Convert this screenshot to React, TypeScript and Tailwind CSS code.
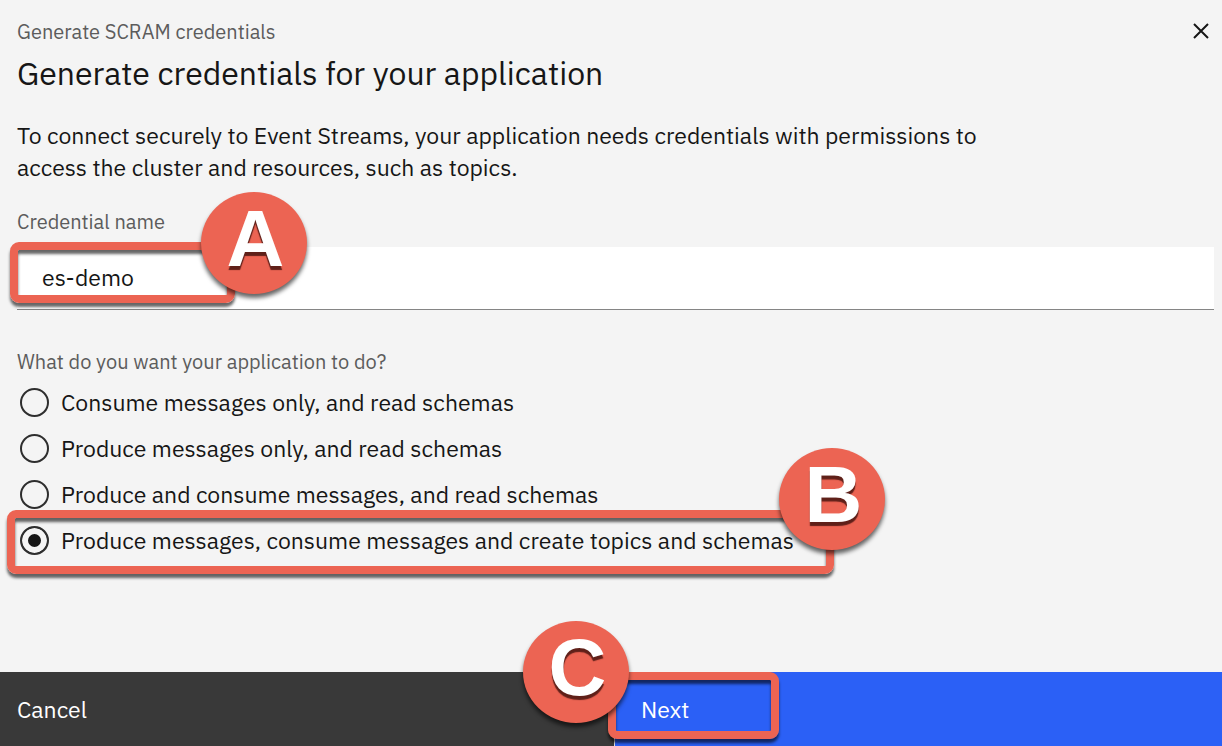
import { useState } from "react";

const options = [
  "Consume messages only, and read schemas",
  "Produce messages only, and read schemas",
  "Produce and consume messages, and read schemas",
  "Produce messages, consume messages and create topics and schemas",
];

function Badge({ letter, className }: { letter: string; className: string }) {
  return (
    <span
      className={
        "pointer-events-none absolute z-20 flex h-[102px] w-[106px] items-center justify-center rounded-[50%] bg-[#ec6453] pb-2 pl-[3px] font-['Liberation_Sans',sans-serif] text-[80px] leading-none font-bold text-white shadow-[0_4px_4px_rgba(0,0,0,0.6)] [text-shadow:0_4px_1px_rgba(70,20,15,0.85)] " +
        className
      }
    >
      {letter}
    </span>
  );
}

function Highlight({ className }: { className: string }) {
  return (
    <span
      className={
        "pointer-events-none absolute z-10 rounded-[9px] border-8 border-[#ec6453] shadow-[0_4px_3px_rgba(0,0,0,0.6),inset_0_4px_3px_rgba(0,0,0,0.6)] " +
        className
      }
    />
  );
}

export default function App() {
  const [name, setName] = useState("es-demo");
  const [choice, setChoice] = useState(3);

  return (
    <div className="flex min-h-screen flex-col bg-[#f4f4f4] font-['IBM_Plex_Sans','Noto_Sans',sans-serif] text-[#161616]">
      <main className="flex grow flex-col pr-2 pl-[17px]">
        <header className="flex items-start justify-between pt-[18px]">
          <div>
            <p className="text-[20px] leading-7 text-[#5c5c5c]">Generate SCRAM credentials</p>
            <h1 className="mt-[7px] text-[32px] leading-10">Generate credentials for your application</h1>
          </div>
          <button type="button" aria-label="Close" className="p-[5px]">
            <svg viewBox="0 0 16 16" className="size-4" fill="none" stroke="#161616" strokeWidth="2">
              <path d="M1 1 15 15M15 1 1 15" />
            </svg>
          </button>
        </header>

        <p className="mt-[26px] max-w-[980px] text-[23px] leading-8">
          To connect securely to Event Streams, your application needs credentials with permissions to access the cluster
          and resources, such as topics.
        </p>

        <label htmlFor="credential-name" className="mt-[27px] text-[20px] leading-6 text-[#5c5c5c]">
          Credential name
        </label>
        <div className="relative mt-[13px]">
          <input
            id="credential-name"
            type="text"
            value={name}
            onChange={(e) => setName(e.target.value)}
            className="block h-[63px] w-full border-b border-[#858585] bg-white px-[25px] pb-[2px] text-[23px] outline-none"
          />
          <Highlight className="-top-[5px] -left-[7px] h-[61px] w-[225px]" />
          <Badge letter="A" className="-top-[55px] left-[184px]" />
        </div>

        <fieldset className="mt-10">
          <legend className="text-[20px] leading-6 text-[#5c5c5c]">What do you want your application to do?</legend>
          <div className="relative mt-[5px]">
            {options.map((text, i) => (
              <label key={text} className="flex h-[46px] items-center gap-3 pl-[3px] text-[23px]">
                <input
                  type="radio"
                  name="permission"
                  checked={choice === i}
                  onChange={() => setChoice(i)}
                  className="size-[29px] shrink-0 appearance-none rounded-full border-2 border-[#2e2e2e] checked:bg-[#161616] checked:shadow-[inset_0_0_0_6px_#f4f4f4]"
                />
                {text}
              </label>
            ))}
            <Highlight className="top-[131px] -left-[10px] h-[64px] w-[827px]" />
            <Badge letter="B" className="top-[69px] left-[762px]" />
          </div>
        </fieldset>
      </main>

      <footer className="grid h-[74px] grid-cols-[615fr_607fr] text-[23px] text-white">
        <button type="button" className="border-r border-[#e0e0e0] bg-[#393939] px-[17px] text-left">
          Cancel
        </button>
        <div className="relative flex">
          <button type="button" className="grow bg-[#2b60f6] px-[26px] text-left">
            Next
          </button>
          <Highlight className="top-0 -left-[7px] h-[67px] w-[171px]" />
          <Badge letter="C" className="-top-[51px] -left-[92px]" />
        </div>
      </footer>
    </div>
  );
}
